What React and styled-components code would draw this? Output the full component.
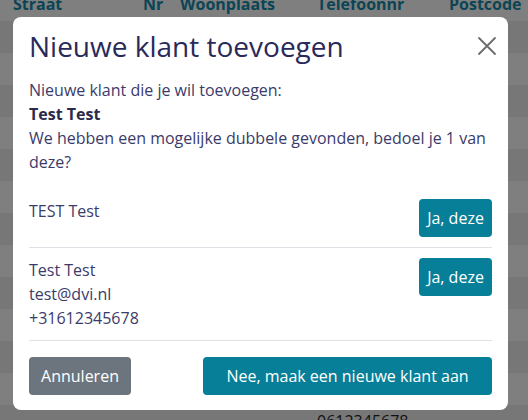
import React from "react";
import styled, { createGlobalStyle } from "styled-components";

const GlobalStyle = createGlobalStyle`
  html, body {
    margin: 0;
    padding: 0;
    background: #7f7f7f;
    font-family: "Open Sans", "Noto Sans", sans-serif;
    overflow: hidden;
  }
  * {
    box-sizing: border-box;
  }
`;

// achtergrond: de klantentabel achter de modal (al gedimd door de backdrop)
const Page = styled.div`
  position: relative;
  width: 528px;
  height: 420px;
  overflow: hidden;
  background: #7f7f7f;
`;

const Table = styled.div`
  margin-top: -12px;
`;

const TableRow = styled.div`
  display: grid;
  grid-template-columns: 130px 37px 137px 132px 1fr;
  padding-left: 13px;
  height: ${(p) => (p.$head ? "33px" : "32px")};
  padding-top: 4px;
  line-height: 24px;
  font-size: 16px;
  background: ${(p) => (p.$striped ? "#777777" : "#7f7f7f")};
  color: ${(p) => (p.$head ? "#0b4555" : "#111111")};
  font-weight: ${(p) => (p.$head ? 700 : 400)};
  white-space: nowrap;
`;

const Backdrop = styled.div`
  position: absolute;
  top: 0;
  left: 0;
  width: 528px;
  height: 420px;
  z-index: 10;
  padding: 17px 20px 0 13px;
`;

const Modal = styled.div`
  width: 495px;
  background: #ffffff;
  border-radius: 8px;
  display: flex;
  flex-direction: column;
`;

const Header = styled.div`
  display: flex;
  align-items: center;
  justify-content: space-between;
  padding: 12px 16px 0 16px;
`;

const Title = styled.h2`
  margin: 0;
  font-size: 28px;
  line-height: 34px;
  font-weight: 400;
  color: #2a2a5a;
`;

const CloseButton = styled.button`
  width: 26px;
  height: 26px;
  margin-right: -8px;
  padding: 0;
  border: 0;
  background: none;
  display: flex;
  align-items: center;
  justify-content: center;
  cursor: pointer;
`;

const Body = styled.div`
  padding: 15px 16px 0 16px;
  font-size: 16px;
  line-height: 24px;
  color: #3b3b6b;
`;

const Line = styled.div`
  font-weight: ${(p) => (p.$bold ? 700 : 400)};
  color: ${(p) => (p.$bold ? "#2a2a4a" : "inherit")};
`;

const List = styled.div`
  margin-top: 15px;
`;

const Match = styled.div`
  display: flex;
  justify-content: space-between;
  align-items: flex-start;
  padding: 10px 0;
  border-bottom: 1px solid #dee2e6;
`;

const Button = styled.button`
  width: ${(p) => p.$w}px;
  height: 38px;
  padding: 0;
  border: 0;
  border-radius: 4px;
  background: ${(p) => (p.$grey ? "#6c757d" : "#087f99")};
  color: #ffffff;
  font-family: inherit;
  font-size: 16px;
  line-height: 24px;
  cursor: pointer;
`;

const Footer = styled.div`
  display: flex;
  justify-content: space-between;
  align-items: center;
  padding: 16px 16px 15px 16px;
`;

// alleen de onderste rij komt onder de modal uit
const rows = Array.from({ length: 13 }, (_, i) => ({
  tel: i === 12 ? "0612345678" : "",
}));

const matches = [
  { id: 1, lines: ["TEST Test"] },
  { id: 2, lines: ["Test Test", "test@dvi.nl", "+31612345678"] },
];

function CloseIcon() {
  return (
    <svg width="20" height="20" viewBox="0 0 20 20" fill="none">
      <path d="M2 2 L18 18 M18 2 L2 18" stroke="#6b6b6b" strokeWidth="1.8" strokeLinecap="round" />
    </svg>
  );
}

export default function App() {
  return (
    <>
      <GlobalStyle />
      <Page>
        <Table>
          <TableRow $head>
            <span>Straat</span>
            <span>Nr</span>
            <span>Woonplaats</span>
            <span>Telefoonnr</span>
            <span>Postcode</span>
          </TableRow>
          {rows.map((r, i) => (
            <TableRow key={i} $striped={i % 2 === 0}>
              <span />
              <span />
              <span />
              <span>{r.tel}</span>
              <span />
            </TableRow>
          ))}
        </Table>

        <Backdrop>
          <Modal>
            <Header>
              <Title>Nieuwe klant toevoegen</Title>
              <CloseButton aria-label="Sluiten">
                <CloseIcon />
              </CloseButton>
            </Header>
            <Body>
              <Line>Nieuwe klant die je wil toevoegen:</Line>
              <Line $bold>Test Test</Line>
              <Line>We hebben een mogelijke dubbele gevonden, bedoel je 1 van deze?</Line>
              <List>
                {matches.map((m) => (
                  <Match key={m.id}>
                    <div>
                      {m.lines.map((l) => (
                        <Line key={l}>{l}</Line>
                      ))}
                    </div>
                    <Button $w={73}>Ja, deze</Button>
                  </Match>
                ))}
              </List>
            </Body>
            <Footer>
              <Button $grey $w={102}>Annuleren</Button>
              <Button $w={289}>Nee, maak een nieuwe klant aan</Button>
            </Footer>
          </Modal>
        </Backdrop>
      </Page>
    </>
  );
}
